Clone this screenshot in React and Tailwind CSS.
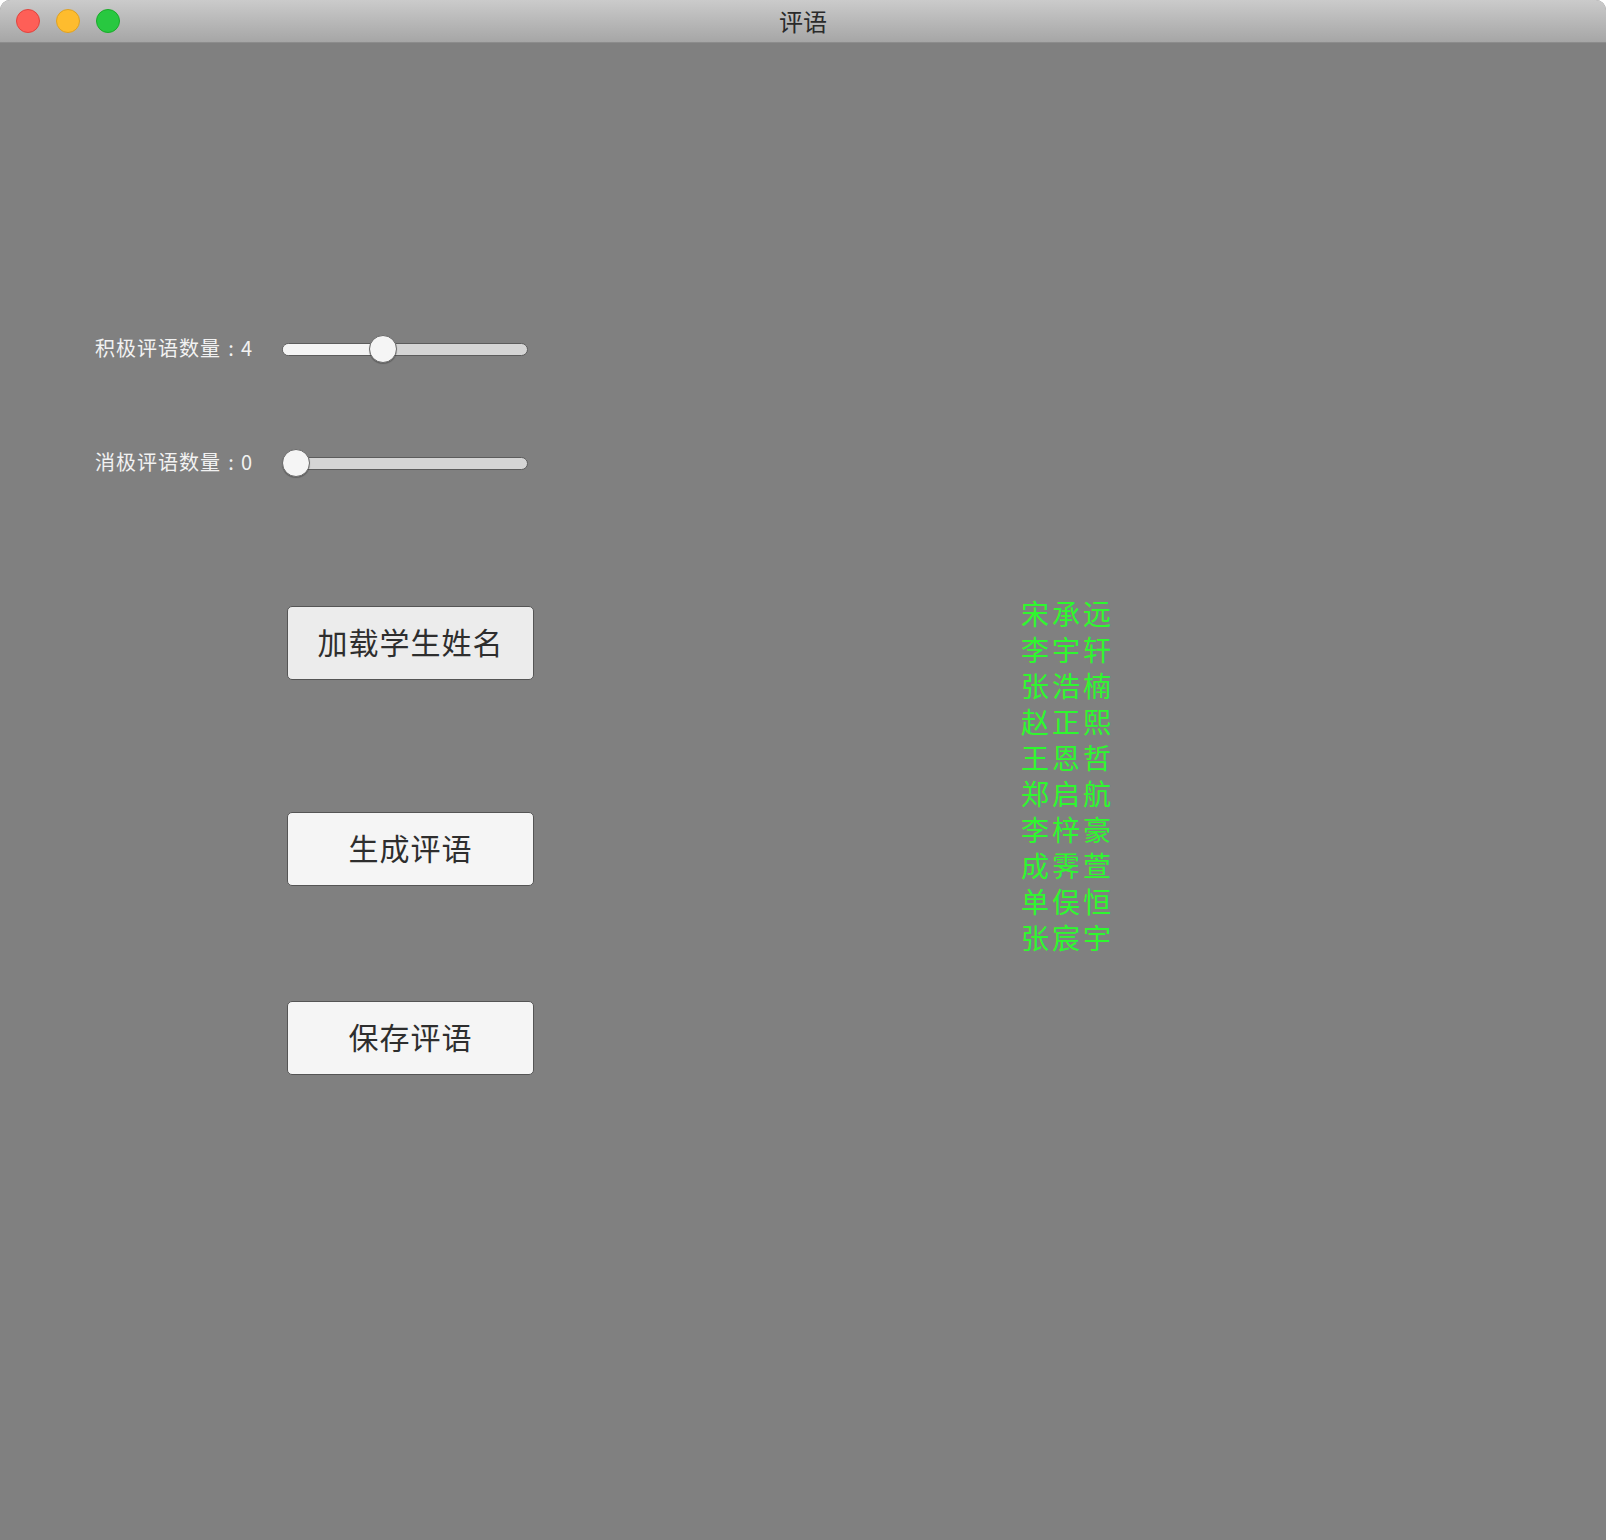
import React from "react";

const cjk = { fontFamily: '"Noto Sans CJK SC", "Noto Sans", sans-serif' };

function Slider({ value, max = 10 }) {
  const pct = value / max;
  const travel = 246 - 28;
  const center = 14 + travel * pct;
  return (
    <div className="relative w-[246px] h-[28px] flex items-center">
      <div className="relative w-full h-[13px] rounded-full bg-[#d5d5d5] border border-[#5c5c5c] overflow-hidden">
        <div className="h-full bg-[#f4f4f4]" style={{ width: `${center}px` }} />
      </div>
      <div
        className="absolute top-0 w-[28px] h-[28px] rounded-full bg-[#f5f5f5] border border-[#6a6a6a] shadow-[0_1px_1px_rgba(0,0,0,0.25)]"
        style={{ left: `${center - 14}px` }}
      />
    </div>
  );
}

function Button({ children, bg }) {
  return (
    <div
      className={`w-[247px] h-[74px] rounded-[5px] border border-[#555] flex items-center justify-center pb-[4px] text-[30px] text-[#2e2e2e] tracking-[1px] ${bg}`}
      style={cjk}
    >
      {children}
    </div>
  );
}

function Label({ text, num }) {
  return (
    <div className="w-[187px] pb-[3px] text-[20px] text-[#f2f2f2] tracking-[1px] whitespace-nowrap leading-none flex items-center">
      <span>{text}</span>
      <span className="inline-block w-[20px] text-center tracking-normal">:</span>
      <span className="tracking-normal">{num}</span>
    </div>
  );
}

const names = ["宋承远", "李宇轩", "张浩楠", "赵正熙", "王恩哲", "郑启航", "李梓豪", "成霁萱", "单俣恒", "张宸宇"];

export default function App() {
  return (
    <div className="w-[1606px] h-[1540px] bg-white overflow-hidden" style={cjk}>
      <div className="w-full h-full flex flex-col rounded-t-[10px] overflow-hidden bg-[#808080]">
        <div className="relative h-[43px] shrink-0 bg-gradient-to-b from-[#cbcbcb] to-[#a6a6a6] border-b border-[#8c8c8c] flex items-center">
          <div className="flex items-center gap-[16px] pl-[16px]">
            <div className="w-[24px] h-[24px] rounded-full bg-[#fe5f57] border border-[#e0443e]" />
            <div className="w-[24px] h-[24px] rounded-full bg-[#febc2e] border border-[#dea123]" />
            <div className="w-[24px] h-[24px] rounded-full bg-[#28c840] border border-[#1aab29]" />
          </div>
          <div className="absolute inset-0 flex items-center justify-center text-[24px] text-[#2a2a2a] pointer-events-none">
            评语
          </div>
        </div>
        <div className="flex flex-row">
          <div className="flex flex-col pl-[95px] pt-[292px] w-[1021px] shrink-0">
            <div className="flex items-center h-[28px]">
              <Label text="积极评语数量" num="4" />
              <Slider value={4} />
            </div>
            <div className="flex items-center h-[28px] mt-[86px]">
              <Label text="消极评语数量" num="0" />
              <Slider value={0} />
            </div>
            <div className="pl-[192px] mt-[129px] flex flex-col">
              <Button bg="bg-[#ececec]">加载学生姓名</Button>
              <div className="mt-[132px]">
                <Button bg="bg-[#f5f5f5]">生成评语</Button>
              </div>
              <div className="mt-[115px]">
                <Button bg="bg-[#f5f5f5]">保存评语</Button>
              </div>
            </div>
          </div>
          <div className="pt-[552px] flex flex-col text-[28px] leading-[36px] tracking-[3px] text-[#2ef82e]">
            {names.map((n, i) => (
              <div key={i}>{n}</div>
            ))}
          </div>
        </div>
      </div>
    </div>
  );
}
